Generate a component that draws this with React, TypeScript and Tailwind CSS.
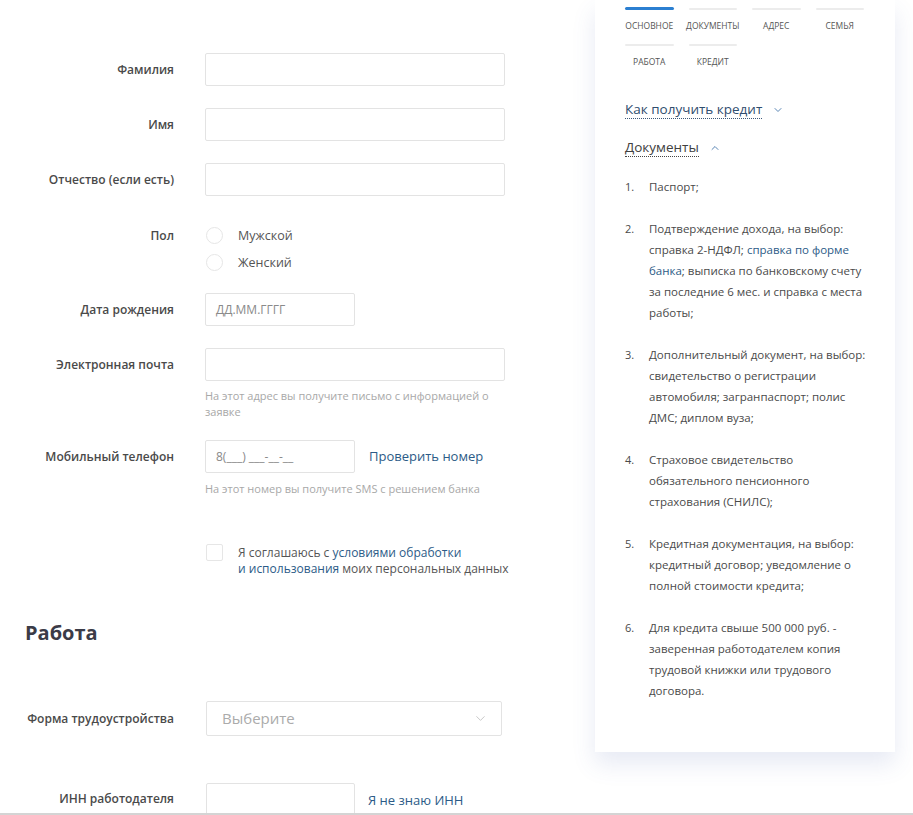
import { ChevronDown, ChevronUp } from "lucide-react";

const font = { fontFamily: '"Open Sans", "Liberation Sans", sans-serif' };

const tabs = [
  { title: "Основное", active: true },
  { title: "Документы" },
  { title: "Адрес" },
  { title: "Семья" },
  { title: "Работа" },
  { title: "Кредит" },
];

const documents: React.ReactNode[] = [
  "Паспорт;",
  <>
    Подтверждение дохода, на выбор: справка 2-НДФЛ;{" "}
    <span className="text-[#2c5b87]">справка по форме банка</span>; выписка по
    банковскому счету за последние 6 мес. и справка с места работы;
  </>,
  "Дополнительный документ, на выбор: свидетельство о регистрации автомобиля; загранпаспорт; полис ДМС; диплом вуза;",
  "Страховое свидетельство обязательного пенсионного страхования (СНИЛС);",
  "Кредитная документация, на выбор: кредитный договор; уведомление о полной стоимости кредита;",
  "Для кредита свыше 500 000 руб. - заверенная работодателем копия трудовой книжки или трудового договора.",
];

function Label({ children }: { children: React.ReactNode }) {
  return (
    <div className="w-[174px] shrink-0 text-right text-[12px] font-semibold text-[#4a4a4a]">
      {children}
    </div>
  );
}

function Field({
  label,
  wide = true,
  placeholder,
  className = "",
}: {
  label: string;
  wide?: boolean;
  placeholder?: string;
  className?: string;
}) {
  return (
    <div className={`flex items-center ${className}`}>
      <Label>{label}</Label>
      <div
        className={`ml-[31px] h-[33px] rounded-[2px] border border-[#e3e3e3] px-[10px] text-[12px] leading-[31px] text-[#8a8a8a] ${
          wide ? "w-[300px]" : "w-[150px]"
        }`}
      >
        {placeholder}
      </div>
    </div>
  );
}

function Hint({ children, className = "" }: { children: React.ReactNode; className?: string }) {
  return (
    <div className={`ml-[205px] w-[300px] text-[11px] leading-[16px] text-[#a8a8a8] ${className}`}>
      {children}
    </div>
  );
}

function Circle() {
  return <div className="h-[17px] w-[17px] rounded-full border border-[#e6e6e6]" />;
}

export default function App() {
  return (
    <div className="h-[815px] overflow-hidden bg-white" style={font}>
      <div className="flex h-[813px] overflow-hidden">
        {/* form */}
        <div className="w-[595px] shrink-0">
          <Field label="Фамилия" className="mt-[53px]" />
          <Field label="Имя" className="mt-[22px]" />
          <Field label="Отчество (если есть)" className="mt-[22px]" />

          <div className="mt-[31px] flex">
            <Label>
              <div className="leading-[17px]">Пол</div>
            </Label>
            <div className="ml-[32px] flex flex-col gap-[10px] text-[12.5px] leading-[17px] text-[#555]">
              <div className="flex items-center gap-[15px]">
                <Circle />
                <span>Мужской</span>
              </div>
              <div className="flex items-center gap-[15px]">
                <Circle />
                <span>Женский</span>
              </div>
            </div>
          </div>

          <Field label="Дата рождения" wide={false} placeholder="ДД.ММ.ГГГГ" className="mt-[22px]" />
          <Field label="Электронная почта" className="mt-[22px]" />
          <Hint className="mt-[7px]">На этот адрес вы получите письмо с информацией о заявке</Hint>

          <div className="mt-[20px] flex items-center">
            <Label>Мобильный телефон</Label>
            <div className="ml-[31px] h-[33px] w-[150px] rounded-[2px] border border-[#e3e3e3] px-[10px] text-[12px] leading-[31px] text-[#8a8a8a]">
              8(___) ___-__-__
            </div>
            <span className="ml-[14px] text-[13px] text-[#2c5b87]">Проверить номер</span>
          </div>
          <Hint className="mt-[8px]">На этот номер вы получите SMS с решением банка</Hint>

          <div className="ml-[206px] mt-[48px] flex items-start gap-[15px]">
            <div className="mt-[-1px] h-[17px] w-[17px] shrink-0 rounded-[2px] border border-[#e6e6e6]" />
            <div className="text-[12px] leading-[16px] text-[#555]">
              Я соглашаюсь с{" "}
              <span className="text-[#2c5b87]">
                условиями обработки
                <br />и использования
              </span>{" "}
              моих персональных данных
            </div>
          </div>

          <h2 className="ml-[25px] mt-[41px] text-[20px] font-bold leading-[30px] text-[#3b3b47]">
            Работа
          </h2>

          <div className="mt-[53px] flex items-center">
            <Label>Форма трудоустройства</Label>
            <div className="ml-[32px] flex h-[35px] w-[296px] items-center justify-between rounded-[2px] border border-[#e3e3e3] pl-[15px] pr-[13px] text-[15px] text-[#ababab]">
              <span>Выберите</span>
              <ChevronDown size={15} strokeWidth={1.2} className="text-[#b5b5b5]" />
            </div>
          </div>

          <div className="mt-[47px] flex items-start">
            <Label>
              <div className="pt-[7px]">ИНН работодателя</div>
            </Label>
            <div className="ml-[32px] h-[40px] w-[149px] rounded-[2px] border border-[#e3e3e3]" />
            <span className="ml-[13px] pt-[8px] text-[13px] text-[#2c5b87]">Я не знаю ИНН</span>
          </div>
        </div>

        {/* side panel */}
        <div className="h-[752px] w-[300px] shrink-0 bg-white pl-[30px] pr-[26px] pt-[7px] shadow-[0_12px_22px_rgba(70,90,170,0.13)]">
          <div className="grid w-[239px] grid-cols-4 gap-x-[15px]">
            {tabs.map((t) => (
              <div key={t.title} className="flex h-[36px] flex-col items-center">
                <div
                  className={`w-full rounded-full ${
                    t.active ? "h-[3px] bg-[#2b7fd1]" : "mt-[1px] h-[2px] bg-[#ececec]"
                  }`}
                />
                <div className="mt-[10px] whitespace-nowrap text-[8.5px] uppercase leading-[12px] text-[#555]">
                  {t.title}
                </div>
              </div>
            ))}
          </div>

          <div className="mt-[21px] flex items-center gap-[10px]">
            <span className="border-b border-dotted border-[#3c5878] text-[13.5px] leading-[18px] text-[#2f4d6e]">
              Как получить кредит
            </span>
            <ChevronDown size={12} strokeWidth={2} className="text-[#5a86b5]" />
          </div>

          <div className="mt-[19px] flex items-center gap-[10px]">
            <span className="border-b border-dotted border-[#444] text-[13.5px] leading-[18px] text-[#404040]">
              Документы
            </span>
            <ChevronUp size={12} strokeWidth={2} className="text-[#5a86b5]" />
          </div>

          <ol className="mt-[19px] flex flex-col gap-[21px] text-[11.5px] leading-[21px] text-[#4a4a4a]">
            {documents.map((d, i) => (
              <li key={i} className="flex">
                <span className="w-[24px] shrink-0 text-[11px]">{i + 1}.</span>
                <p>{d}</p>
              </li>
            ))}
          </ol>
        </div>
      </div>
      <div className="h-[2px] bg-[#d4d4d4]" />
    </div>
  );
}
